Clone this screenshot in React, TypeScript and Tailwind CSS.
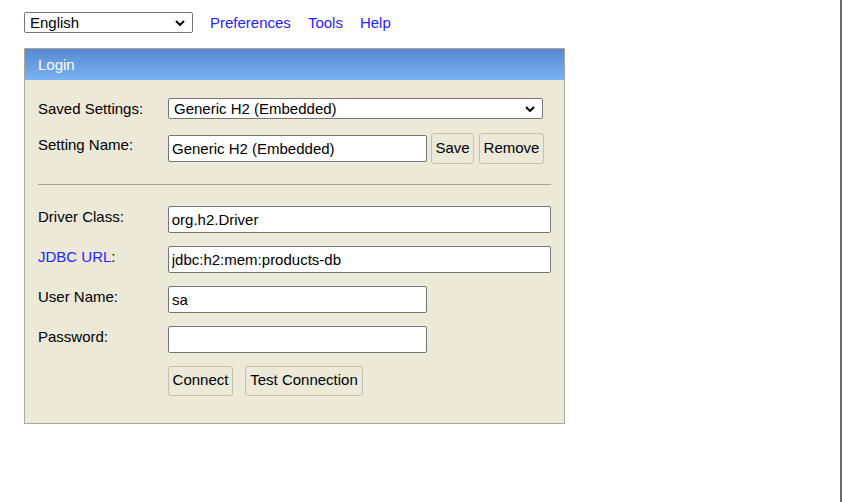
import type { ReactElement } from "react";

const FONT = { fontFamily: '"Liberation Sans", Arial, sans-serif' };

function Chevron(): ReactElement {
  return (
    <svg
      viewBox="0 0 10 6"
      className="pointer-events-none absolute right-[8px] top-1/2 h-[6px] w-[10px] -translate-y-1/2"
    >
      <path d="M1 1 L5 5 L9 1" fill="none" stroke="#000" strokeWidth="2" />
    </svg>
  );
}

function Select({ value, w }: { value: string; w: string }): ReactElement {
  return (
    <div className={`relative ${w}`}>
      <select
        defaultValue={value}
        className="h-[21px] w-full appearance-none rounded-[2px] border border-[#767676] bg-white pl-[5px] text-[15px] leading-[19px] text-black"
      >
        <option value={value}>{value}</option>
      </select>
      <Chevron />
    </div>
  );
}

function Field({ label, value, wide }: { label: ReactElement | string; value: string; wide?: boolean }): ReactElement {
  return (
    <div className="flex items-start">
      <div className="w-[130px] pt-[2px] leading-[18px]">{label}</div>
      <input
        readOnly
        value={value}
        className={[
          "h-[27px] rounded-[2px] border border-[#767676] bg-white px-[3px] text-[15px] text-black",
          wide ? "w-[384px]" : "w-[259px]",
        ].join(" ")}
      />
    </div>
  );
}

function Btn({ children, w }: { children: string; w: string }): ReactElement {
  return (
    <button
      type="button"
      className={`${w} rounded-[3px] border border-[#c2bfb3] bg-[#ece9d8] text-[15px] text-black`}
    >
      {children}
    </button>
  );
}

export default function App(): ReactElement {
  return (
    <div className="flex h-[502px] w-[842px] bg-white text-[15px] text-black" style={FONT}>
      <div className="flex-1 pl-[24px] pt-[12px]">
        <div className="flex h-[21px] items-center leading-[21px]">
          <Select value="English" w="w-[169px]" />
          <div className="ml-[17px] flex gap-[17px] text-[#2424ff]">
            <a href="#">Preferences</a>
            <a href="#">Tools</a>
            <a href="#">Help</a>
          </div>
        </div>

        <div className="mt-[15px] w-[541px] border border-[#a9a797] bg-[#ece9d8]">
          <div className="h-[31px] bg-gradient-to-b from-[#5988cf] to-[#7ab3f3] pl-[13px] leading-[31px] text-white">
            Login
          </div>

          <div className="px-[13px] pb-[27px] pt-[18px]">
            <div className="flex items-center">
              <div className="w-[130px]">Saved Settings:</div>
              <Select value="Generic H2 (Embedded)" w="w-[375px]" />
            </div>

            <div className="mt-[12px] flex items-start">
              <div className="w-[130px] pt-[3px] leading-[18px]">Setting Name:</div>
              <div className="flex items-center">
                <input
                  readOnly
                  value="Generic H2 (Embedded)"
                  className="h-[27px] w-[259px] rounded-[2px] border border-[#767676] bg-white px-[3px] text-[15px] text-black"
                />
                <div className="ml-[4px] flex h-[31px] gap-[5px]">
                  <Btn w="w-[43px]">Save</Btn>
                  <Btn w="w-[65px]">Remove</Btn>
                </div>
              </div>
            </div>

            <div className="mb-[21px] mt-[20px] border-t border-[#a6a49a]" />

            <div className="flex flex-col gap-[13px]">
              <Field label="Driver Class:" value="org.h2.Driver" wide />
              <Field
                label={
                  <span>
                    <a href="#" className="text-[#2424ff]">
                      JDBC URL
                    </a>
                    :
                  </span>
                }
                value="jdbc:h2:mem:products-db"
                wide
              />
              <Field label="User Name:" value="sa" />
              <Field label="Password:" value="" />
              <div className="flex h-[30px] gap-[12px] pl-[130px]">
                <Btn w="w-[65px]">Connect</Btn>
                <Btn w="w-[118px]">Test Connection</Btn>
              </div>
            </div>
          </div>
        </div>
      </div>
      <div className="w-[2px] bg-[#6b6b6b]" />
    </div>
  );
}
